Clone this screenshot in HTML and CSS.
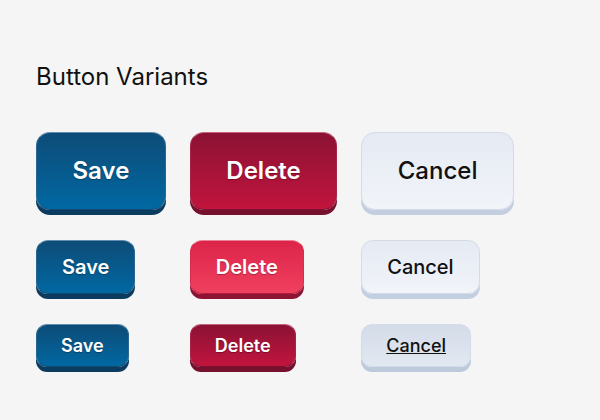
FILE: index.html
```html
<!DOCTYPE html>
<html lang="en">
<head>
  <meta charset="UTF-8">
  <title>Button Variants</title>
  <link rel="stylesheet" href="styles.css">
</head>
<body>

<main>
  <h2>Button Variants</h2>

  <div class="button-grid">
    <button class="btn save large">Save</button>
    <button class="btn delete large">Delete</button>
    <button class="btn cancel large">Cancel</button>

    <button class="btn save medium">Save</button>
    <button class="btn delete medium hover">Delete</button>
    <button class="btn cancel medium">Cancel</button>

    <button class="btn save small">Save</button>
    <button class="btn delete small">Delete</button>
    <button class="btn cancel small focus">Cancel</button>
  </div>
</main>

</body>
</html>
```

FILE: styles.css
```css
body {
  margin: 0;
  font-family: Inter, "Noto Sans", sans-serif;
  background-color: #f5f5f5;
  color: #111;
}

main {
  padding: 62px 36px;
}

h2 {
  margin: 0 0 41px;
  font-size: 24px;
  line-height: 29px;
  font-weight: 400;
}

.button-grid {
  display: grid;
  grid-template-columns: repeat(3, max-content);
  gap: 30px 24px;
  justify-items: start;
  align-items: start;
}

.btn {
  font-family: Inter, "Noto Sans", sans-serif;
  font-weight: 600;
  border: 1px solid;
  cursor: pointer;
}

.large {
  font-size: 24px;
  line-height: 28px;
  padding: 24px 35.5px;
  border-radius: 14px;
}

.medium {
  font-size: 20px;
  line-height: 24px;
  padding: 14px 25px;
  border-radius: 12px;
}

.small {
  font-size: 18px;
  line-height: 21px;
  padding: 10px 24px;
  border-radius: 11px;
}

.save {
  color: #fff;
  background: linear-gradient(#0d4c77, #0168a2);
  border-color: #5f8cb0 #2c6690 #0f4a73;
  box-shadow: 0 5px 0 #0b3c5f;
  text-shadow: 0 1px 1px rgba(0, 0, 0, 0.3);
}

.delete {
  color: #fff;
  background: linear-gradient(#8b1234, #c2143d);
  border-color: #c4647e #a62447 #7e1030;
  box-shadow: 0 5px 0 #75102d;
  text-shadow: 0 1px 1px rgba(0, 0, 0, 0.3);
}

.delete.hover {
  background: linear-gradient(#dc2449, #f0405f);
  border-color: #ee8197 #d82c4f #b81a3c;
  box-shadow: 0 5px 0 #8e1433;
}

.cancel {
  color: #111;
  font-weight: 500;
  background: linear-gradient(#e5eaf3, #f1f4f9);
  border-color: #d3dbe8;
  box-shadow: 0 5px 0 #c3cfe0;
}

.cancel.focus {
  background: linear-gradient(#d4dce9, #e2e8f1);
  text-decoration: underline;
  box-shadow: 0 5px 0 #bccadc;
}
```
